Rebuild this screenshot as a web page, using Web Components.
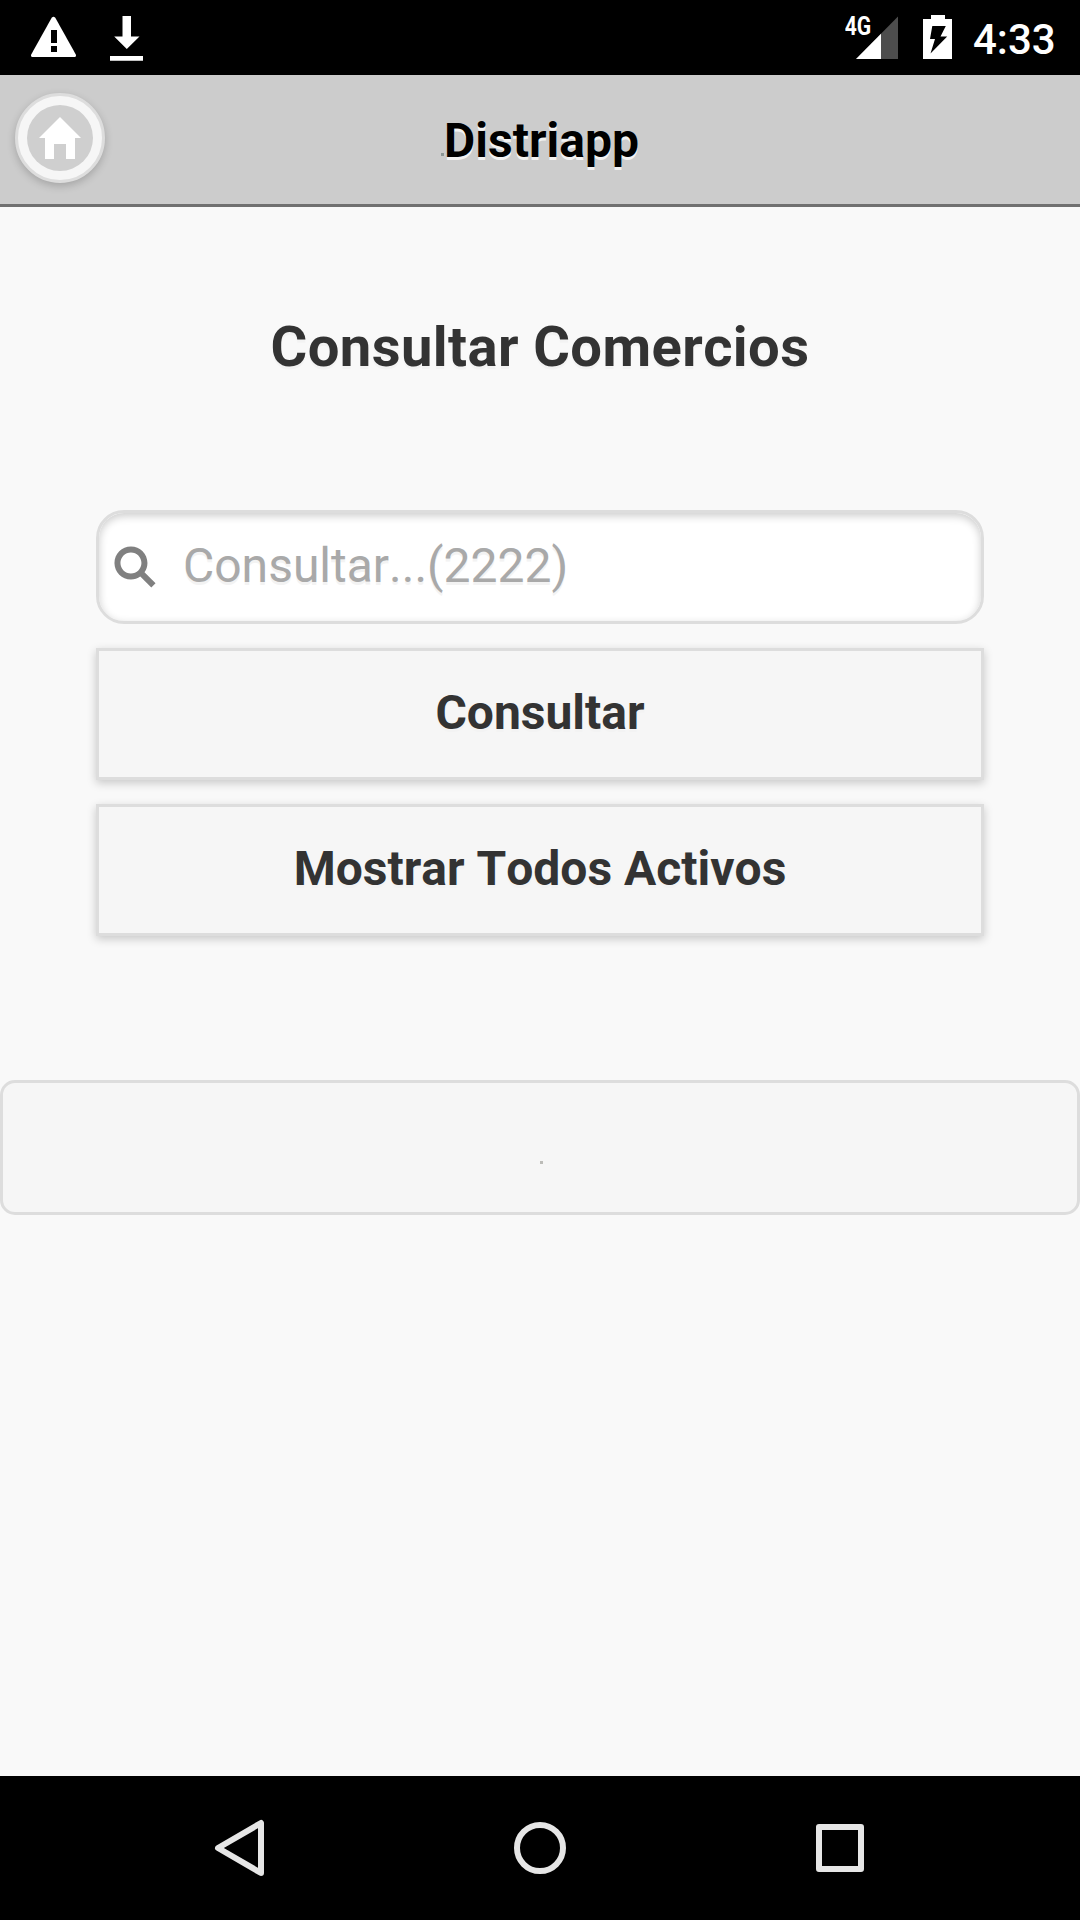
<!DOCTYPE html>
<html lang="es">
<head>
<meta charset="utf-8">
<title>Distriapp</title>
<style>
html,body{margin:0;height:100%;overflow:hidden}
body{font-family:Roboto,"Noto Sans",sans-serif;font-size:48px;font-kerning:none;color:#333;background:#f9f9f9}
</style>
</head>
<body>
<distri-app></distri-app>
<script>
function define(name, html) {
  const t = document.createElement('template');
  t.innerHTML = html;
  customElements.define(name, class extends HTMLElement {
    constructor() {
      super();
      this.attachShadow({mode: 'open'}).appendChild(t.content.cloneNode(true));
    }
  });
}

define('status-bar', `
<style>
:host{display:flex;justify-content:space-between;box-sizing:border-box;height:75px;background:#000;color:#fff;padding:0 25px 0 31px}
svg{display:block;flex:none}
.side{display:flex}
.time{font-weight:500;font-size:42px;line-height:49px;padding-top:15px;margin-left:21px;width:82px;white-space:nowrap}
</style>
<div class="side">
  <svg width="112" height="75" viewBox="31 0 112 75" fill="#fff">
    <path d="M51.7 17.8Q53.500 15.800 55.300 17.800L75.800 54.500Q76.500 57 74.500 57H32.500Q30.500 57 31.200 54.500Z"/>
    <path fill="#000" d="M51 30h6v13h-6zM51 46h6v6h-6z"/>
    <path d="M122.500 16h8.500v20.500h8.500L126.800 49 114.200 36.500h8.300zM110 56h33v4.700h-33z"/>
  </svg>
</div>
<div class="side">
  <svg width="107" height="75" viewBox="845 0 107 75" fill="#fff">
    <text x="844.700" y="35.300" font-size="25.500" font-weight="700" textLength="26.500" lengthAdjust="spacingAndGlyphs">4G</text>
    <path fill="#4d4d4d" d="M898 16.500V59H856z"/>
    <path d="M881 33.700V59H856z"/>
    <path d="M931 15h14v4h7v40h-29V19h8z"/>
    <path fill="#000" d="M932.300 26h13.500l-5.300 10.500h6.700L930.500 53.500l4.500-14.500h-5z"/>
  </svg>
  <div class="time">4:33</div>
</div>`);

define('home-button', `
<style>
:host{display:flex;align-items:center;justify-content:center;box-sizing:border-box;width:90px;height:90px;border:3px solid #ddd;border-radius:50%;background:#f6f6f6;box-shadow:0 3px 9px rgba(0,0,0,.2)}
div{display:flex;align-items:center;justify-content:center;width:66px;height:66px;border-radius:50%;background:#cfcfcf}
</style>
<div><svg width="42" height="42" viewBox="0 0 14 14"><path fill="#fff" d="M7 0 0 7h2v7h3V9h4v5h3V7h2z"/></svg></div>`);

define('app-header', `
<style>
:host{display:grid;grid-template-columns:90px 1fr 90px;box-sizing:border-box;height:132px;padding:18px 15px 0;background:#ccc;border-bottom:3px solid #707070}
.title{display:flex;justify-content:center;padding-top:20px}
i{width:3px;height:3px;margin-top:40px;background:#8b9696}
h1{margin:0;font-size:48px;line-height:56px;font-weight:700;color:#000;text-shadow:0 3px 0 #f3f3f3}
</style>
<home-button></home-button>
<div class="title"><i></i><h1><slot></slot></h1></div>`);

define('search-field', `
<style>
:host{display:flex;box-sizing:border-box;height:114px;border:3px solid #ddd;border-radius:28px;background:#fff;box-shadow:inset 0 3px 9px rgba(0,0,0,.2);padding:33px 0 0 15px}
svg{display:block;flex:none}
span{margin:-8px 0 0 27px;line-height:56px;color:#a9a9a9;text-shadow:0 3px 0 #f3f3f3}
</style>
<svg width="42" height="42" viewBox="0 0 14 14"><path fill="#808080" fill-rule="evenodd" d="M10.171 8.766c.617-.888.979-1.964.979-3.126 0-3.037-2.463-5.500-5.500-5.500s-5.500 2.463-5.500 5.500 2.463 5.500 5.500 5.500c1.152 0 2.223-.355 3.104-.962l3.684 3.683 1.414-1.414zM5.649 9.140c-1.933 0-3.500-1.567-3.500-3.500s1.567-3.500 3.500-3.500 3.500 1.567 3.500 3.500-1.567 3.500-3.500 3.500z"/></svg>
<span><slot></slot></span>`);

define('action-button', `
<style>
:host{display:block;box-sizing:border-box;height:132px;border:3px solid #ddd;background:#f6f6f6;box-shadow:0 3px 9px rgba(0,0,0,.2);padding-top:34px;text-align:center;font-weight:700;line-height:56px;text-shadow:0 3px 0 #f3f3f3}
</style>
<slot></slot>`);

define('result-panel', `
<style>
:host{display:flex;justify-content:center;box-sizing:border-box;height:135px;border:3px solid #ddd;border-radius:15px;background:#f6f6f6}
i{width:3px;height:3px;margin:78px 0 0 3px;background:#bcbcb8}
</style>
<i></i>`);

define('nav-bar', `
<style>
:host{display:flex;justify-content:center;align-items:center;gap:200px;height:144px;background:#000}
svg{display:block}
</style>
<svg width="100" height="100" viewBox="190 1798 100 100" fill="none" stroke="#e6e6e6" stroke-width="6" stroke-linejoin="round"><path d="M261 1823v50L218 1848z"/></svg>
<svg width="100" height="100" viewBox="0 0 100 100" fill="none" stroke="#e6e6e6" stroke-width="6"><circle cx="50" cy="50" r="23"/></svg>
<svg width="100" height="100" viewBox="0 0 100 100" fill="none" stroke="#e6e6e6" stroke-width="6" stroke-linejoin="round"><path d="M29 29h42v42H29z"/></svg>`);

define('distri-app', `
<style>
:host{display:flex;flex-direction:column;height:1920px;background:#f9f9f9}
main{flex:1}
h3{margin:0;padding-top:107px;font-size:56.160px;line-height:66px;font-weight:700;text-align:center;letter-spacing:.4px;text-shadow:0 3px 0 #f3f3f3}
.form{display:flex;flex-direction:column;gap:24px;margin:130px 96px 144px}
</style>
<status-bar></status-bar>
<app-header>Distriapp</app-header>
<main>
  <h3>Consultar Comercios</h3>
  <div class="form">
    <search-field>Consultar...(2222)</search-field>
    <action-button>Consultar</action-button>
    <action-button>Mostrar Todos Activos</action-button>
  </div>
  <result-panel></result-panel>
</main>
<nav-bar></nav-bar>`);
</script>
</body>
</html>
